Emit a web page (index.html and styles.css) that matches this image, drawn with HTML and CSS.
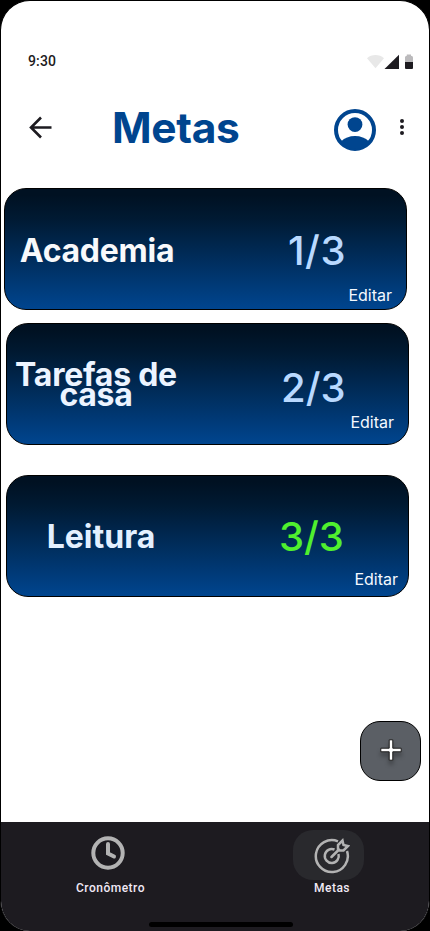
FILE: index.html
```html
<!DOCTYPE html>
<html lang="pt-BR">
<head>
<meta charset="utf-8">
<meta name="viewport" content="width=device-width, initial-scale=1">
<title>Metas</title>
<link rel="stylesheet" href="styles.css">
</head>
<body>
<div class="screen">
  <div class="status">
    <span class="time">9:30</span>
    <svg class="status-icons" width="48" height="16" viewBox="0 0 48 16">
      <path d="M1 4.3C5.5 0 13.500 0 18 4.300L9.500 14.300Z" fill="#e8e8e8"/>
      <path d="M18.500 15V15L33 .7V15Z" fill="#1d1b20"/>
      <path d="M39 3.500Q39 1.700 40.800 1.700V.5H45V1.700Q47 1.700 47 3.500V8H39Z" fill="#bbbabc"/>
      <path d="M39 8H47V14Q47 15 46 15H40Q39 15 39 14Z" fill="#1d1b20"/>
    </svg>
  </div>
  <header class="header">
    <svg class="back" width="24" height="24" viewBox="0 0 24 24"><path d="M23.500 12.500H3M13 2.500 3 12.500 13 22.500" fill="none" stroke="#1d1b20" stroke-width="2.600"/></svg>
    <h1 class="title">Metas</h1>
    <svg class="avatar" width="42" height="42" viewBox="0 0 42 42">
      <circle cx="21" cy="21" r="19" fill="none" stroke="#00458f" stroke-width="4"/>
      <circle cx="21" cy="15.600" r="7.400" fill="#00458f"/>
      <path d="M7 32.500Q12.500 27 21 27T35 32.500Q29 40 21 40T7 32.500Z" fill="#00458f"/>
    </svg>
    <svg class="more" width="4" height="16" viewBox="0 0 4 16" fill="#1d1b20"><circle cx="2" cy="2" r="2"/><circle cx="2" cy="8" r="2"/><circle cx="2" cy="14" r="2"/></svg>
  </header>
  <main class="goals">
    <section class="card card-gym">
      <h2 class="name">Academia</h2>
      <p class="count">1/3</p>
      <a class="edit">Editar</a>
    </section>
    <section class="card card-home">
      <h2 class="name">Tarefas de casa</h2>
      <p class="count">2/3</p>
      <a class="edit">Editar</a>
    </section>
    <section class="card card-read">
      <h2 class="name">Leitura</h2>
      <p class="count">3/3</p>
      <a class="edit">Editar</a>
    </section>
  </main>
  <button class="add" aria-label="Adicionar">
    <svg width="24" height="28" viewBox="0 0 24 28"><path d="M10.200 1.800H13.800V10.200H22.200V13.800H13.800V22.200H10.200V13.800H1.800V10.200H10.200Z" fill="#fff" stroke="#1b1b1b" stroke-width="1"/></svg>
  </button>
  <nav class="nav">
    <a class="tab">
      <span class="pill"><svg class="clock" width="34" height="34" viewBox="0 0 34 34" fill="none" stroke="#b3b3b3" stroke-width="4"><circle cx="17" cy="17" r="14.700"/><path d="M17 8V17.500L23 20.500" stroke-linecap="round"/></svg></span>
      <span class="label">Cronômetro</span>
    </a>
    <a class="tab tab-on">
      <span class="pill"><svg class="target" width="36" height="36" viewBox="0 0 36 36" fill="none" stroke="#b3b3b3" stroke-width="2.500"><path d="M24 3.300A16 16 0 1 0 33 13"/><path d="M20.500 11.500A7 7 0 1 0 24.500 16"/><path d="M17.500 19 25 11.500M24 12V7L28.500 2.500 29.500 7 34 8 29.500 12.500H24" stroke-linecap="round"/></svg></span>
      <span class="label">Metas</span>
    </a>
    <span class="home"></span>
  </nav>
</div>
</body>
</html>
```
FILE: styles.css
```css
* { box-sizing: border-box; }
body { margin: 0; background: #000; font-family: Inter, "Liberation Sans", sans-serif; }
.screen { height: 931px; display: flex; flex-direction: column; border: 1px solid #000; border-bottom: 0; border-radius: 30px; background: #fff; overflow: hidden; }
h1, h2, p { margin: 0; }
svg { display: block; flex: none; }

.status { height: 84px; padding: 36px 15px 0 27px; display: flex; align-items: center; justify-content: space-between; }
.time { font: 500 14px/20px Roboto, sans-serif; letter-spacing: .14px; color: #1d1b20; }
.status-icons { margin-top: 1px; }

.header { height: 103px; padding: 23px 0 0 27px; display: flex; align-items: flex-start; }
.back { margin-top: 7px; }
.title { width: 129px; margin: -6px 0 0 60px; font-size: 42.5px; line-height: 52px; font-weight: 700; letter-spacing: -.35px; color: #00458f; white-space: nowrap; }
.avatar { margin: 1px 0 0 93px; }
.more { margin: 11px 0 0 24px; }

.goals { height: 532px; }
.card { width: 403px; height: 122px; display: grid; grid-template-columns: 180px 1fr; border: 1px solid #000; border-radius: 22px; background: linear-gradient(#001122 5%, #001a33 25%, #00458f 100%); }
.name { grid-row: 1; font-size: 32px; line-height: 20px; font-weight: 700; text-align: center; }
.count { grid-row: 1; grid-column: 2; font-size: 40px; line-height: 40px; font-weight: 500; color: #b9d9ff; }
.edit { grid-row: 1; grid-column: 2; justify-self: end; align-self: end; font-size: 16px; line-height: 20px; color: #f5f9ff; }
.card-gym { margin-left: 3px; }
.card-gym .name { color: #f8f9fb; padding: 52px 0 0 4px; letter-spacing: -.25px; }
.card-gym .count { padding: 42px 0 0 103px; letter-spacing: .5px; }
.card-gym .edit { margin: 0 14px 4px 0; }
.card-home { margin: 13px 0 0 5px; }
.card-home .name { color: #ecf4ff; padding: 41px 2px 0 0; letter-spacing: -.25px; }
.card-home .count { padding: 44px 0 0 94px; }
.card-home .edit { margin: 0 14px 12px 0; }
.card-read { margin: 30px 0 0 5px; }
.card-read .name { color: #e3f0ff; padding: 51px 0 0 8px; }
.card-read .count { padding: 41px 0 0 92px; color: #50f02e; }
.card-read .edit { margin: 0 10px 7px 0; }

.add { width: 61px; height: 60px; margin: 1px 8px 0 auto; padding: 2px 0 0; display: flex; align-items: center; justify-content: center; border: 1px solid #000; border-radius: 20px; background: #5b5f65; flex: none; }
.add svg { filter: drop-shadow(0 4px 2px rgba(0, 0, 0, .3)); }

.nav { position: relative; height: 109px; margin-top: auto; padding: 8px 65px 0 74px; display: flex; justify-content: space-between; background: #1d1b20; flex: none; }
.tab { width: 71px; display: flex; flex-direction: column; align-items: center; }
.pill { width: 71px; height: 50px; display: flex; justify-content: center; border-radius: 20px; }
.tab-on .pill { background: #29292d; }
.clock { margin: 6px 6px 0 0; }
.target { margin: 8px 0 0 7px; }
.label { font: 500 12px/16px Roboto, sans-serif; letter-spacing: .5px; color: #f1e9f5; }
.tab-on .label { padding-left: 7px; }
.home { position: absolute; left: 148px; bottom: 4px; width: 144px; height: 5px; border-radius: 3px; background: #000; }
```
